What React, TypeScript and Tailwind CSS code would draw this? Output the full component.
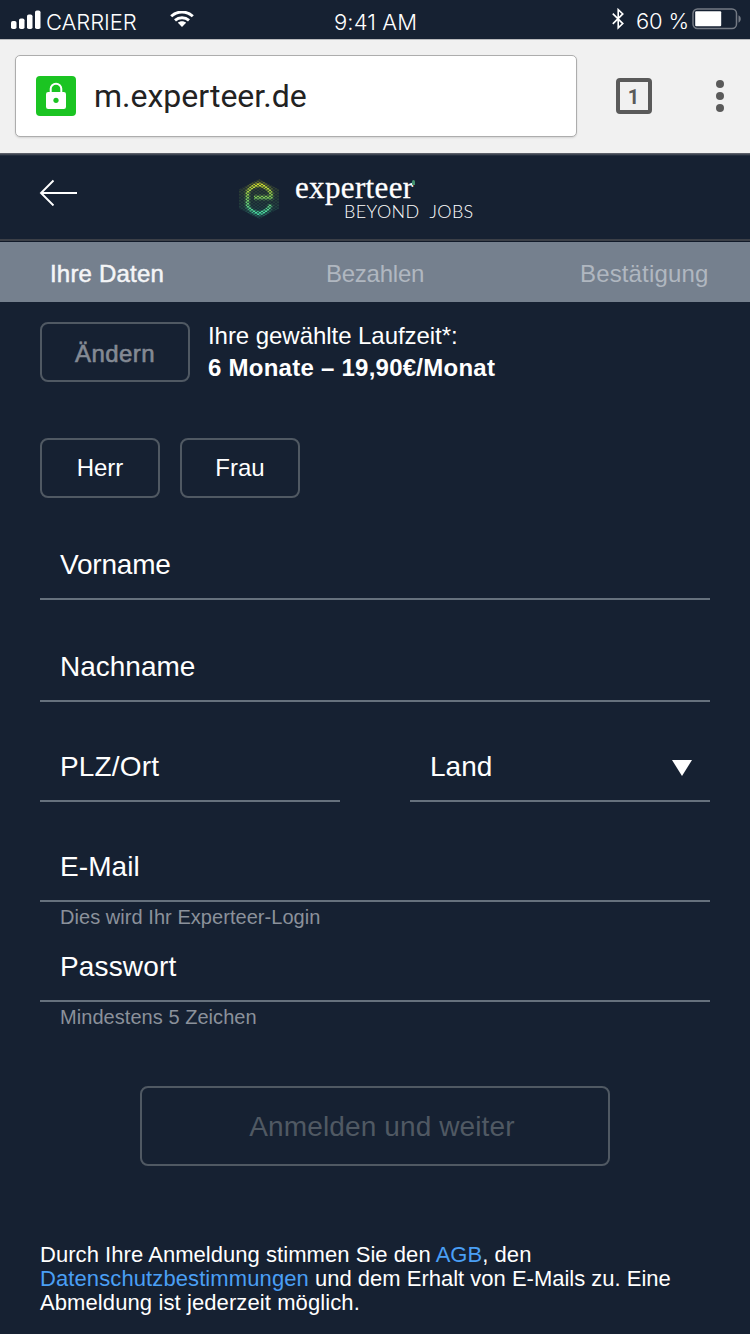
import React from "react";

const sans = "font-['Liberation_Sans',Arial,sans-serif]";

function StatusBar() {
  return (
    <div className="flex h-[39px] items-center bg-[#162132] pt-[5px] font-['Inter',sans-serif] text-white">
      <svg className="ml-[11px] -mt-[6px]" width="30" height="19" viewBox="0 0 30 19" fill="white">
        <rect x="0" y="11" width="5.5" height="8" rx="1.8" />
        <rect x="8" y="8.5" width="5.5" height="10.5" rx="1.8" />
        <rect x="16" y="4.5" width="5.5" height="14.5" rx="1.8" />
        <rect x="24" y="0.5" width="5.5" height="18.5" rx="1.8" />
      </svg>
      <span className="ml-[5px] w-[92px] whitespace-nowrap text-[22px] leading-[26px] font-light tracking-[-0.1px]">CARRIER</span>
      <svg className="ml-[32px] -mt-[6px]" width="24" height="17" viewBox="0 0 24 17" fill="none" stroke="white" strokeWidth="2.9">
        <path d="M1.200 5.300C7.200 -.4 16.800 -.4 22.800 5.300" />
        <path d="M5 9.400C9 5.800 15 5.800 19 9.400" />
        <path d="M12 10.200c-1.700 0-3 .5-4.100 1.500L12 16l4.100-4.300c-1.100-1-2.400-1.500-4.100-1.500z" fill="white" stroke="none" />
      </svg>
      <span className="ml-[140px] w-[90px] whitespace-nowrap text-[22px] leading-[26px] font-light tracking-[0.1px]">9:41 AM</span>
      <svg className="ml-[188px] -mt-[6px]" width="12" height="22" viewBox="0 0 12 22" fill="none" stroke="white" strokeWidth="1.600">
        <path d="M.8 5.600l10 10-4.600 4.300V1.600l4.600 4.300-10 10" />
      </svg>
      <span className="ml-[12px] -mt-[2px] w-[56px] whitespace-nowrap text-[22px] leading-[26px] font-light tracking-[-0.2px]">60 %</span>
      <svg className="-mt-[6px]" width="50" height="22" viewBox="0 0 50 22">
        <rect x="1" y="1" width="43.500" height="19.500" rx="4.500" fill="none" stroke="#747a84" strokeWidth="1.500" />
        <rect x="3.200" y="3.300" width="26" height="15" rx="1" fill="white" />
        <path d="M46.500 7.300c3 1.500 3 5.800 0 7.400z" fill="#747a84" />
      </svg>
    </div>
  );
}

function BrowserBar() {
  return (
    <div className="flex h-[114px] items-start border-t border-[#b9babd] bg-[#f1f1f1] pt-[15px] pl-[15px]">
      <div className="flex h-[82px] w-[562px] items-center rounded-[5px] border border-[#adadad] bg-white pl-5 shadow-[0_1px_2px_rgba(0,0,0,0.12)]">
        <svg width="40" height="40" viewBox="0 0 40 40">
          <rect width="40" height="40" rx="4" fill="#1bc422" />
          <path d="M14.700 17v-4.200a5.300 5 0 0 1 10.600 0V17" fill="none" stroke="white" strokeWidth="2" />
          <rect x="10" y="16" width="20" height="17" rx="2.200" fill="white" />
          <circle cx="20" cy="24.300" r="2.600" fill="#1bc422" />
        </svg>
        <span className="ml-[18px] font-['Roboto',sans-serif] text-[32px] leading-[40px] text-[#222]">m.experteer.de</span>
      </div>
      <div className="mt-[23px] ml-[39px] flex size-9 items-center justify-center rounded-[4px] border-4 border-[#5a5a5a] font-['Roboto',sans-serif] text-[20px] leading-none font-bold text-[#5a5a5a]">
        <span className="mt-[2px] mr-px">1</span>
      </div>
      <div className="mt-[25px] ml-[64px] flex flex-col gap-1">
        <span className="size-2 rounded-full bg-[#5a5a5a]" />
        <span className="size-2 rounded-full bg-[#5a5a5a]" />
        <span className="size-2 rounded-full bg-[#5a5a5a]" />
      </div>
    </div>
  );
}

function LogoMark() {
  return (
    <svg width="40" height="40" viewBox="0 0 40 40">
      <defs>
        <linearGradient id="leaf" x1="0" y1="0" x2="0" y2="40" gradientUnits="userSpaceOnUse">
          <stop offset="0.1" stopColor="#d8de2a" />
          <stop offset="0.45" stopColor="#7cc454" />
          <stop offset="0.85" stopColor="#46d8a0" />
        </linearGradient>
        <pattern id="dots" width="4" height="3" patternUnits="userSpaceOnUse">
          <rect width="4" height="3" fill="#555" />
          <rect x="0" y="0" width="2" height="1.500" fill="white" />
          <rect x="2" y="1.500" width="2" height="1.500" fill="white" />
        </pattern>
        <mask id="grid">
          <rect width="40" height="40" fill="url(#dots)" />
        </mask>
      </defs>
      <g mask="url(#grid)">
        <path d="M20 0l20 10.500v19L20 40 0 29.500v-19z" fill="url(#leaf)" opacity="0.17" />
        <path d="M15 18.500h17v-4C31 9 26 6 20 5.500 14 6 9 9 8.500 14v12c.5 5 5.500 8 11.500 8.500 6-.5 10.500-3.500 11.500-9" fill="none" stroke="url(#leaf)" strokeWidth="6.500" strokeLinejoin="round" opacity="0.22" />
        <path d="M15 18.500h17v-4C31 11 26 7 20 5.500 14 7 9 10.500 8.500 14v12c.5 3.500 5.500 7 11.500 8.500 6-1.500 10.500-5 11.500-9" fill="none" stroke="url(#leaf)" strokeWidth="3.400" strokeLinejoin="round" />
      </g>
    </svg>
  );
}

function Header() {
  return (
    <div className="flex h-[89px] flex-col border-b border-[#111a29]">
      <div className="h-[3px] bg-linear-to-b from-[#6b6d74] to-[#162132]" />
      <div className="flex h-[85px] items-start border-b-2 border-[#3b3f47] pl-[39px]">
        <svg className="mt-[23px]" width="38" height="27" viewBox="0 0 38 27" fill="none" stroke="white" strokeWidth="1.900">
          <path d="M38 14H2M14.500 1.500L2 14 14.500 26.500" />
        </svg>
        <div className="mt-[23px] ml-[162px]">
          <LogoMark />
        </div>
        <div className="mt-[19px] ml-[16px] flex w-[190px] flex-col">
          <div className="flex h-[28px] whitespace-nowrap font-['Liberation_Serif',serif] text-[31px] leading-[26px] tracking-[0.35px] text-white [-webkit-text-stroke:0.3px_white]">
            <span>experteer</span>
            <span className="mt-[5px] -ml-[1px] h-[5px] w-[3px] rounded-t-full bg-[#43936f]" />
          </div>
          <span className="ml-[49px] font-['Lato',sans-serif] text-[18px] leading-[16px] font-light tracking-[0.35px] whitespace-pre text-white">BEYOND  JOBS</span>
        </div>
      </div>
    </div>
  );
}

function Steps() {
  return (
    <div className="flex h-[60px] bg-[#75808e] pt-[18px] pl-[50px] text-[24px] leading-[28px] text-[#b0b7c0]">
      <span className="w-[276px] whitespace-nowrap tracking-[0.2px] text-[#f4f5f7] [-webkit-text-stroke:0.5px_#f4f5f7]">Ihre Daten</span>
      <span className="w-[254px] whitespace-nowrap tracking-[-0.25px]">Bezahlen</span>
      <span className="whitespace-nowrap tracking-[0.15px]">Bestätigung</span>
    </div>
  );
}

function Field({ label, className }: { label: string; className: string }) {
  return (
    <div className={`flex items-end border-b-2 border-[#66717d] pb-[17px] pl-5 text-[28px] leading-[32px] whitespace-nowrap ${className}`}>
      {label}
    </div>
  );
}

export default function App() {
  return (
    <div className={`${sans} flex h-[1334px] w-[750px] flex-col overflow-hidden bg-[#162132] text-white`}>
      <StatusBar />
      <BrowserBar />
      <Header />
      <Steps />
      <main className="flex flex-col px-10">
        <div className="mt-5 flex h-[62px]">
          <button className="h-[60px] w-[150px] rounded-[8px] border-2 border-[#505963] pt-[4px] text-[24px] leading-[28px] tracking-[0.4px] text-[#848a94] [-webkit-text-stroke:0.6px_#848a94]">
            Ändern
          </button>
          <div className="-mt-[2px] ml-[18px] flex flex-col text-[24px] leading-[32px] whitespace-nowrap">
            <span className="tracking-[-0.05px]">Ihre gewählte Laufzeit*:</span>
            <span className="font-bold tracking-[0.25px]">6 Monate – 19,90€/Monat</span>
          </div>
        </div>
        <div className="mt-[54px] flex gap-5 text-[24px] leading-[28px]">
          <button className="h-[60px] w-[120px] rounded-[8px] border-2 border-[#505963]">Herr</button>
          <button className="h-[60px] w-[120px] rounded-[8px] border-2 border-[#505963]">Frau</button>
        </div>
        <Field label="Vorname" className="h-[102px] tracking-[-0.2px]" />
        <Field label="Nachname" className="h-[102px]" />
        <div className="flex justify-between">
          <Field label="PLZ/Ort" className="h-[100px] w-[300px] tracking-[0.15px]" />
          <div className="flex h-[100px] w-[300px] items-end justify-between border-b-2 border-[#66717d] pr-[18px] pb-[17px] pl-5 text-[28px] leading-[32px]">
            <span>Land</span>
            <svg className="mb-[7px]" width="20" height="16" viewBox="0 0 20 16" fill="white">
              <path d="M0 0h20L10 16z" />
            </svg>
          </div>
        </div>
        <Field label="E-Mail" className="h-[100px] tracking-[0.1px]" />
        <p className="h-[30px] pt-[3px] pl-5 text-[20px] leading-[24px] tracking-[0.05px] text-[#8b919b]">Dies wird Ihr Experteer-Login</p>
        <Field label="Passwort" className="h-[70px] tracking-[0.15px]" />
        <p className="h-[30px] pt-[3px] pl-5 text-[20px] leading-[24px] tracking-[0.05px] text-[#8b919b]">Mindestens 5 Zeichen</p>
        <button className="mt-[54px] h-[80px] w-[470px] self-center rounded-[8px] border-2 border-[#505963] pt-[2px] pl-[14px] text-[28px] leading-[32px] tracking-[0.12px] text-[#505963]">
          Anmelden und weiter
        </button>
        <p className="mt-[77px] text-[22px] leading-[24px] whitespace-nowrap">
          <span className="tracking-[0.05px]">
            Durch Ihre Anmeldung stimmen Sie den <span className="text-[#4a9ff5]">AGB</span>, den
          </span>
          <br />
          <span className="text-[#4a9ff5] tracking-[0.1px]">Datenschutzbestimmungen</span> und dem Erhalt von E-Mails zu. Eine
          <br />
          <span className="tracking-[0.1px]">Abmeldung ist jederzeit möglich.</span>
        </p>
      </main>
    </div>
  );
}
